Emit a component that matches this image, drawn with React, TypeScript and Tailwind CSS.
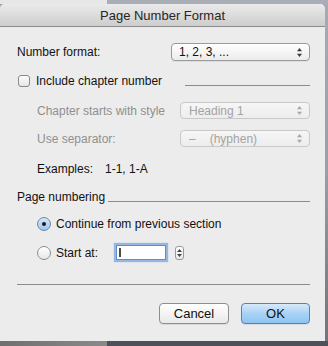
import React from 'react';

const Arrows: React.FC<{ disabled?: boolean }> = ({ disabled }) => (
  <svg width="5" height="9" viewBox="0 0 5 9" className="shrink-0">
    <path d="M2.5 0 L5 3.2 L0 3.2 Z" fill={disabled ? '#a8a8a8' : '#3a3a3a'} />
    <path d="M2.5 9 L5 5.8 L0 5.8 Z" fill={disabled ? '#a8a8a8' : '#3a3a3a'} />
  </svg>
);

const Select: React.FC<{ width: string; disabled?: boolean; children: React.ReactNode }> = ({
  width,
  disabled,
  children,
}) => (
  <div
    className={
      disabled
        ? `${width} h-full ml-auto flex items-center pl-[8px] pr-[7px] rounded-[4px] border border-[#c9c9c9] bg-gradient-to-b from-[#f6f6f6] to-[#ededed] text-[#a3a3a3]`
        : `${width} h-full ml-auto flex items-center pl-[7px] pr-[7px] rounded-[4px] border border-[#9a9a9a] bg-gradient-to-b from-[#ffffff] to-[#ececec] text-[#111] shadow-[0_1px_0_rgba(0,0,0,0.06)]`
    }
  >
    <div className="flex-1 flex items-center">{children}</div>
    <Arrows disabled={disabled} />
  </div>
);

const Radio: React.FC<{ checked?: boolean }> = ({ checked }) => (
  <div
    className={
      checked
        ? 'w-[14px] h-[14px] rounded-full border border-[#6f86a6] bg-gradient-to-b from-[#d4e6f8] to-[#9ec6ee] flex items-center justify-center shrink-0'
        : 'w-[14px] h-[14px] rounded-full border border-[#8d8d8d] bg-gradient-to-b from-[#ffffff] to-[#e6e6e6] shrink-0'
    }
  >
    {checked && <div className="w-[4px] h-[4px] rounded-full bg-[#1b1b1b]" />}
  </div>
);

const App: React.FC = () => {
  return (
    <div className="w-[328px] h-[346px] flex flex-col bg-[#a3a7af] overflow-hidden font-['Liberation_Sans',Arial,sans-serif] text-[12px] text-[#111]">
      <div className="h-[4px] flex shrink-0">
        <div className="w-[107px] bg-[#e7e7e7]" />
        <div className="flex-1 bg-[#a9adb5]" />
      </div>

      <div className="flex flex-1">
        <div className="w-[325px] h-[337px] flex flex-col bg-[#ececec] rounded-t-[5px] overflow-hidden">
          {/* title bar */}
          <div className="h-[23px] shrink-0 flex items-center justify-center bg-gradient-to-b from-[#ebebeb] to-[#cdcdcd] border-b border-[#8c8c8c] text-[13px] text-[#262626] pt-[1px]">
            Page Number Format
          </div>

          <div className="flex flex-col pl-[17px] pr-[15px]">
            <div className="mt-[16px] h-[18px] flex items-center">
              <span>Number format:</span>
              <Select width="w-[139px]">1, 2, 3, ...</Select>
            </div>

            <div className="mt-[13px] h-[13px] flex items-center">
              <div className="ml-[1px] w-[12px] h-[12px] rounded-[3px] border border-[#8a8a8a] bg-gradient-to-b from-[#ffffff] to-[#e4e4e4] shrink-0" />
              <span className="ml-[6px]">Include chapter number</span>
              <div className="ml-auto w-[125px] h-px bg-[#8c8c8c] self-end mb-[1px]" />
            </div>

            <div className="mt-[15px] h-[17px] flex items-center text-[#8f8f8f]">
              <span className="pl-[20px]">Chapter starts with style</span>
              <Select width="w-[130px]" disabled>
                Heading 1
              </Select>
            </div>

            <div className="mt-[11px] h-[17px] flex items-center text-[#8f8f8f]">
              <span className="pl-[20px]">Use separator:</span>
              <Select width="w-[130px]" disabled>
                <span>–</span>
                <span className="ml-[14px]">(hyphen)</span>
              </Select>
            </div>

            <div className="mt-[15px] h-[14px] flex items-center">
              <span className="pl-[20px] w-[88px]">Examples:</span>
              <span>1-1, 1-A</span>
            </div>

            <div className="mt-[14px] h-[14px] flex items-center">
              <span>Page numbering</span>
              <div className="ml-[3px] flex-1 h-px bg-[#8c8c8c] self-end mb-[2px]" />
            </div>

            <div className="mt-[13px] h-[14px] flex items-center pl-[20px]">
              <Radio checked />
              <span className="ml-[5px]">Continue from previous section</span>
            </div>

            <div className="mt-[12px] h-[19px] flex items-center pl-[20px]">
              <Radio />
              <span className="ml-[5px]">Start at:</span>
              <div className="ml-[18px] w-[50px] h-[15px] bg-white border border-[#5f8fcb] shadow-[0_0_1px_2px_rgba(120,165,222,0.75)] flex items-center pl-[2px]">
                <div className="w-[2px] h-[9px] bg-[#4a4a4a]" />
              </div>
              <div className="ml-[9px] w-[9px] h-[14px] rounded-[3px] border border-[#9a9a9a] bg-gradient-to-b from-[#ffffff] to-[#e8e8e8] flex flex-col items-center justify-center gap-[2px]">
                <svg width="5" height="3" viewBox="0 0 5 3">
                  <path d="M2.5 0 L5 3 L0 3 Z" fill="#444" />
                </svg>
                <svg width="5" height="3" viewBox="0 0 5 3">
                  <path d="M2.5 3 L5 0 L0 0 Z" fill="#444" />
                </svg>
              </div>
            </div>

            <div className="mt-[22px] h-px bg-[#8c8c8c]" />

            <div className="mt-[18px] h-[21px] flex justify-end gap-[12px] text-[13px]">
              <button className="w-[70px] h-full rounded-[4px] border border-[#8e8e8e] bg-gradient-to-b from-[#ffffff] to-[#e9e9e9] shadow-[0_1px_0_rgba(0,0,0,0.08)] text-[#111]">
                Cancel
              </button>
              <button className="w-[69px] h-full rounded-[4px] border border-[#5a7fb4] bg-gradient-to-b from-[#d7eafb] via-[#a9d2f6] to-[#8dc5f2] shadow-[0_1px_0_rgba(0,0,0,0.08)] text-[#111]">
                OK
              </button>
            </div>
          </div>
        </div>
        <div className="flex-1 bg-gradient-to-b from-[#a6aab2] via-[#9a9ea6] to-[#707479]" />
      </div>

      <div className="h-[5px] flex shrink-0">
        <div className="w-[107px] bg-gradient-to-r from-[#6f6f6f] to-[#8a8a8a]" />
        <div className="flex-1 bg-[#4d5159]" />
      </div>
    </div>
  );
};

export default App;
